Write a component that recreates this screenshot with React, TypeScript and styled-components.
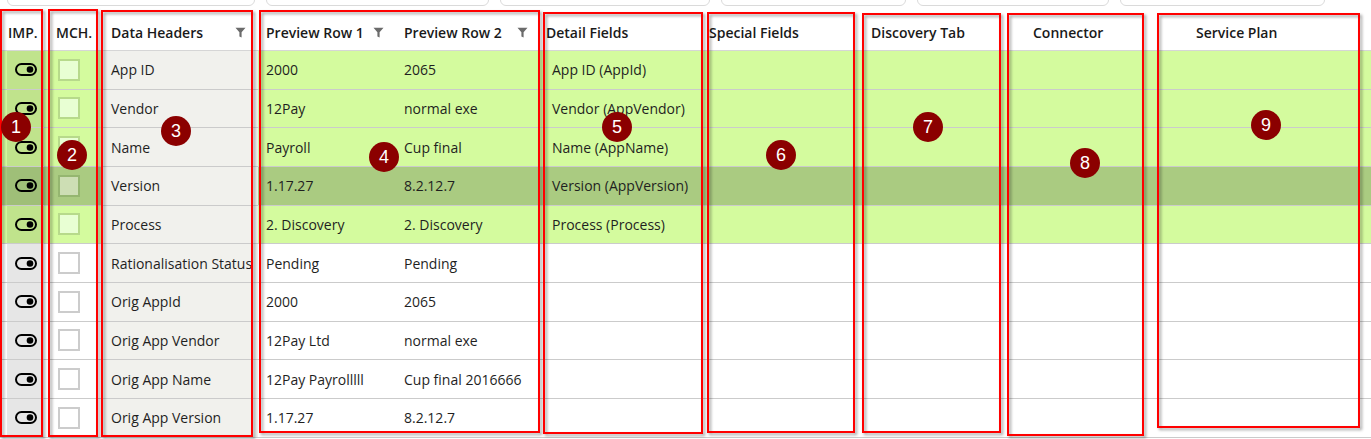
import React from 'react';
import styled, { createGlobalStyle } from 'styled-components';

const GlobalStyle = createGlobalStyle`
  html, body { margin: 0; padding: 0; background: #ffffff; }
  body { font-family: "Open Sans", "Noto Sans", sans-serif; color: #1f1f1f; }
  * { box-sizing: border-box; }
`;

const COLS = '44px 57px 157px 138px 144px 165px 155px 145px 145px 1fr';

type Tone = 'green' | 'selected' | 'plain';
const rowBg: Record<Tone, string> = { green: '#d4fb9e', selected: '#aacb81', plain: '#ffffff' };
const blockBg: Record<Tone, string> = { green: '#c0e38c', selected: '#9fbf78', plain: '#e6e6e6' };
const boxBorder: Record<Tone, string> = { green: '#b7da8b', selected: '#95b670', plain: '#cccccc' };
const boxFill: Record<Tone, string> = { green: '#e8ffd3', selected: '#cddeb4', plain: '#ffffff' };

const Page = styled.div`
  position: relative;
  width: 1371px;
  height: 439px;
  overflow: hidden;
`;

const Toolbar = styled.div`
  height: 6px;
  overflow: hidden;
  display: flex;
  align-items: flex-end;
  gap: 11px;
  padding-left: 7px;
`;

const SearchBox = styled.div<{ $w: number }>`
  flex: 0 0 ${(p) => p.$w}px;
  height: 24px;
  border: 1px solid #dadada;
  border-radius: 6px;
  background: #ffffff;
`;

const HeaderRow = styled.div`
  display: grid;
  grid-template-columns: ${COLS};
  height: 45px;
  border-bottom: 1px solid #d6d6d6;
  background: #ffffff;
`;

const HeadCell = styled.div<{ $pl: number }>`
  display: flex;
  align-items: center;
  justify-content: space-between;
  padding: 8px 0 0 ${(p) => p.$pl}px;
  font-size: 14px;
  font-weight: 600;
  white-space: nowrap;
  color: #1a1a1a;
`;

const FilterMark = styled.svg`
  flex: 0 0 auto;
  margin-right: 12px;
`;

const Row = styled.div<{ $tone: Tone }>`
  display: grid;
  grid-template-columns: ${COLS};
  height: 38.67px;
  border-bottom: 1px solid #cbcbcb;
  background: ${(p) => rowBg[p.$tone]};
  font-size: 14px;
`;

const ImpCell = styled.div`
  padding-left: 7px;
  display: flex;
`;

const ToggleBlock = styled.div<{ $tone: Tone }>`
  flex: 1;
  display: flex;
  align-items: center;
  justify-content: center;
  background: ${(p) => blockBg[p.$tone]};
`;

const MchCell = styled.div`
  display: flex;
  align-items: center;
  padding-left: 14px;
`;

const CheckBox = styled.div<{ $tone: Tone }>`
  width: 22px;
  height: 22px;
  border: 2px solid ${(p) => boxBorder[p.$tone]};
  background: ${(p) => boxFill[p.$tone]};
`;

const TextCell = styled.div<{ $pl: number; $shade?: boolean }>`
  display: flex;
  align-items: center;
  padding-left: ${(p) => p.$pl}px;
  white-space: nowrap;
  overflow: hidden;
  background: ${(p) => (p.$shade ? '#f1f1ed' : 'transparent')};
  color: #1f1f1f;
`;

const Frame = styled.div<{ $x: number; $y: number; $w: number; $h: number }>`
  position: absolute;
  left: ${(p) => p.$x}px;
  top: ${(p) => p.$y}px;
  width: ${(p) => p.$w}px;
  height: ${(p) => p.$h}px;
  border: 2px solid #ff0000;
  filter: drop-shadow(2px 2px 1.5px rgba(0, 0, 0, 0.38));
  pointer-events: none;
`;

const Badge = styled.div<{ $x: number; $y: number }>`
  position: absolute;
  left: ${(p) => p.$x - 15}px;
  top: ${(p) => p.$y - 15}px;
  width: 30px;
  height: 30px;
  border-radius: 50%;
  background: #8b0000;
  color: #ffffff;
  font-family: "Liberation Sans", Arial, sans-serif;
  font-size: 18px;
  display: flex;
  align-items: center;
  justify-content: center;
`;

const Filter = () => (
  <FilterMark width="11" height="11" viewBox="0 0 11 11">
    <path d="M0.5 0.8 H10.5 L6.6 5.2 V10.6 L4.4 9.4 V5.2 Z" fill="#6b6b6b" />
  </FilterMark>
);

const Toggle = () => (
  <svg width="22" height="13" viewBox="0 0 22 13">
    <rect x="1" y="1" width="20" height="11" rx="5.5" fill="none" stroke="#000" strokeWidth="2" />
    <circle cx="15" cy="6.5" r="3.3" fill="#000" />
  </svg>
);

type DataRow = { dh: string; p1: string; p2: string; detail: string; tone: Tone };

const rows: DataRow[] = [
  { dh: 'App ID', p1: '2000', p2: '2065', detail: 'App ID (AppId)', tone: 'green' },
  { dh: 'Vendor', p1: '12Pay', p2: 'normal exe', detail: 'Vendor (AppVendor)', tone: 'green' },
  { dh: 'Name', p1: 'Payroll', p2: 'Cup final', detail: 'Name (AppName)', tone: 'green' },
  { dh: 'Version', p1: '1.17.27', p2: '8.2.12.7', detail: 'Version (AppVersion)', tone: 'selected' },
  { dh: 'Process', p1: '2. Discovery', p2: '2. Discovery', detail: 'Process (Process)', tone: 'green' },
  { dh: 'Rationalisation Status', p1: 'Pending', p2: 'Pending', detail: '', tone: 'plain' },
  { dh: 'Orig AppId', p1: '2000', p2: '2065', detail: '', tone: 'plain' },
  { dh: 'Orig App Vendor', p1: '12Pay Ltd', p2: 'normal exe', detail: '', tone: 'plain' },
  { dh: 'Orig App Name', p1: '12Pay Payrolllll', p2: 'Cup final 2016666', detail: '', tone: 'plain' },
  { dh: 'Orig App Version', p1: '1.17.27', p2: '8.2.12.7', detail: '', tone: 'plain' },
];

const searchWidths = [248, 223, 210, 185, 192, 205];

const headers: { label: string; pl: number; filter?: boolean }[] = [
  { label: 'IMP.', pl: 8 },
  { label: 'MCH.', pl: 12 },
  { label: 'Data Headers', pl: 10, filter: true },
  { label: 'Preview Row 1', pl: 8, filter: true },
  { label: 'Preview Row 2', pl: 8, filter: true },
  { label: 'Detail Fields', pl: 6 },
  { label: 'Special Fields', pl: 4 },
  { label: 'Discovery Tab', pl: 11 },
  { label: 'Connector', pl: 28 },
  { label: 'Service Plan', pl: 46 },
];

const frames = [
  { x: 0, y: 9, r: 43, b: 437 },
  { x: 48, y: 9, r: 98, b: 437 },
  { x: 101, y: 10, r: 253, b: 437 },
  { x: 259, y: 10, r: 540, b: 433 },
  { x: 543, y: 12, r: 703, b: 434 },
  { x: 707, y: 12, r: 855, b: 433 },
  { x: 862, y: 13, r: 1001, b: 433 },
  { x: 1007, y: 13, r: 1144, b: 436 },
  { x: 1157, y: 13, r: 1360, b: 428 },
];

const badges = [
  { n: 1, x: 16, y: 127 },
  { n: 2, x: 72, y: 155 },
  { n: 3, x: 176, y: 131 },
  { n: 4, x: 384, y: 157 },
  { n: 5, x: 617, y: 127 },
  { n: 6, x: 781, y: 155 },
  { n: 7, x: 928, y: 127 },
  { n: 8, x: 1085, y: 163 },
  { n: 9, x: 1266, y: 125 },
];

export default function App() {
  return (
    <>
      <GlobalStyle />
      <Page>
        <Toolbar>
          {searchWidths.map((w, i) => (
            <SearchBox key={i} $w={w} />
          ))}
        </Toolbar>
        <HeaderRow>
          {headers.map((h) => (
            <HeadCell key={h.label} $pl={h.pl}>
              <span>{h.label}</span>
              {h.filter && <Filter />}
            </HeadCell>
          ))}
        </HeaderRow>
        {rows.map((r) => (
          <Row key={r.dh} $tone={r.tone}>
            <ImpCell>
              <ToggleBlock $tone={r.tone}>
                <Toggle />
              </ToggleBlock>
            </ImpCell>
            <MchCell>
              <CheckBox $tone={r.tone} />
            </MchCell>
            <TextCell $pl={10} $shade>{r.dh}</TextCell>
            <TextCell $pl={8}>{r.p1}</TextCell>
            <TextCell $pl={8}>{r.p2}</TextCell>
            <TextCell $pl={12}>{r.detail}</TextCell>
            <TextCell $pl={0} />
            <TextCell $pl={0} />
            <TextCell $pl={0} />
            <TextCell $pl={0} />
          </Row>
        ))}
        {frames.map((f, i) => (
          <Frame key={i} $x={f.x} $y={f.y} $w={f.r - f.x} $h={f.b - f.y} />
        ))}
        {badges.map((b) => (
          <Badge key={b.n} $x={b.x} $y={b.y}>
            {b.n}
          </Badge>
        ))}
      </Page>
    </>
  );
}
